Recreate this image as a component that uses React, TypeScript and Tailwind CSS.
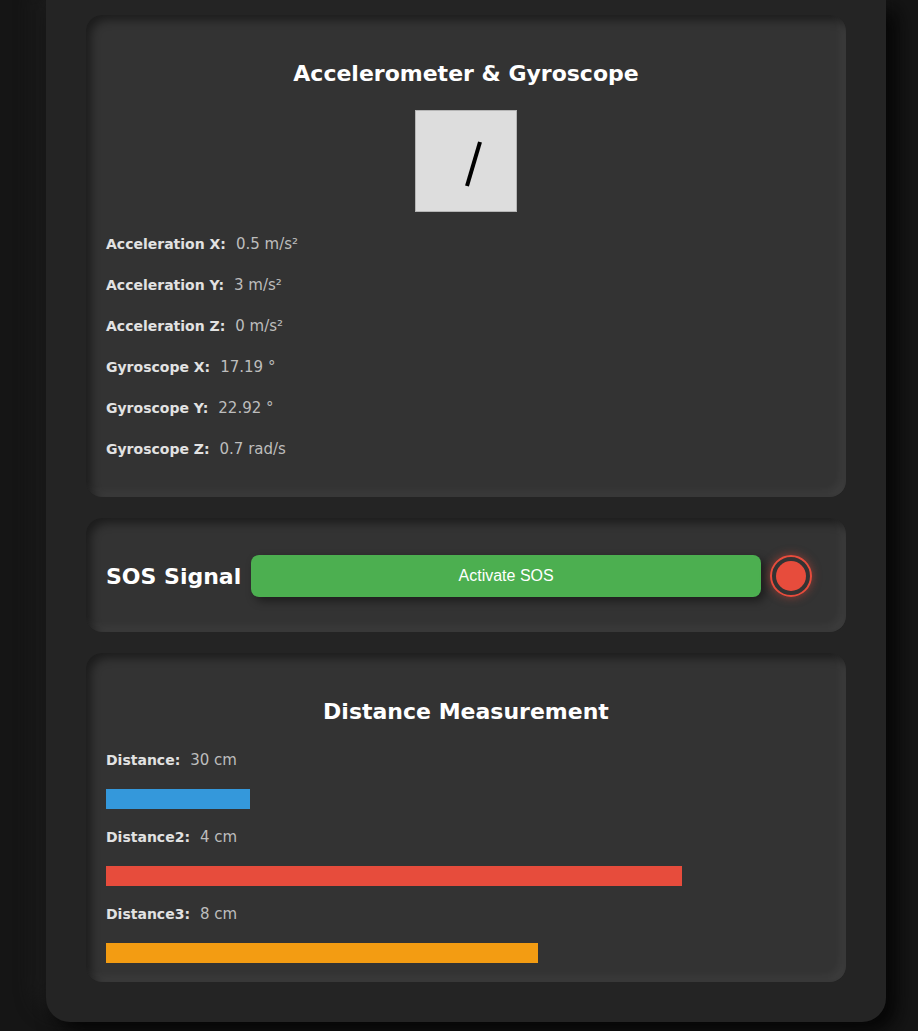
import { ReactNode } from 'react';

const ACCEL_ROWS = [
  { label: 'Acceleration X:', value: '0.5 m/s²' },
  { label: 'Acceleration Y:', value: '3 m/s²' },
  { label: 'Acceleration Z:', value: '0 m/s²' },
  { label: 'Gyroscope X:', value: '17.19 °' },
  { label: 'Gyroscope Y:', value: '22.92 °' },
  { label: 'Gyroscope Z:', value: '0.7 rad/s' },
];

const DISTANCES = [
  { label: 'Distance:', value: '30 cm', pct: 20, color: 'bg-[#3498db]' },
  { label: 'Distance2:', value: '4 cm', pct: 80, color: 'bg-[#e74c3c]' },
  { label: 'Distance3:', value: '8 cm', pct: 60, color: 'bg-[#f39c12]' },
];

function Card({ children, className = '' }: { children: ReactNode; className?: string }) {
  return (
    <div
      className={`rounded-[16px] bg-[#333333] px-5 shadow-[inset_5px_5px_10px_rgba(0,0,0,0.45),inset_-5px_-5px_10px_rgba(255,255,255,0.05)] ${className}`}
    >
      {children}
    </div>
  );
}

function Reading({ label, value }: { label: string; value: string }) {
  return (
    <div className="flex h-[21px] items-baseline">
      <span className="text-[14px] leading-[21px] font-bold text-[#e2e2e2]">{label}</span>
      <span className="ml-[10px] text-[15px] leading-[21px] text-[#bdbdbd]">{value}</span>
    </div>
  );
}

export default function App() {
  return (
    <div
      className="min-h-[1031px] bg-[#151515] pb-[9px]"
      style={{ fontFamily: '"DejaVu Sans", "Noto Sans", sans-serif' }}
    >
      <div className="ml-[46px] w-[840px] rounded-b-[24px] bg-[#242424] px-10 pt-[15px] pb-10 shadow-[10px_10px_20px_#050505,-10px_-10px_20px_#1d1d1d]">
        {/* Accelerometer */}
        <Card className="pt-5 pb-[37px]">
          <h2 className="mt-[22px] text-center text-[22px] font-bold leading-[33px] text-white">
            Accelerometer &amp; Gyroscope
          </h2>
          <div className="mt-5 flex justify-center">
            <div className="h-[102px] w-[102px] border border-[#b5b5b5] bg-[#dddddd]">
              <svg viewBox="0 0 100 100" className="h-[100px] w-[100px]">
                <line x1="64" y1="31" x2="51" y2="75" stroke="#000" strokeWidth="4" />
              </svg>
            </div>
          </div>
          <div className="mt-[22px] flex flex-col gap-5">
            {ACCEL_ROWS.map((r) => (
              <Reading key={r.label} label={r.label} value={r.value} />
            ))}
          </div>
        </Card>

        {/* SOS */}
        <Card className="mt-[21px] flex items-center pt-[37px] pb-[35px]">
          <h2 className="text-[22px] font-bold leading-[33px] text-white">SOS Signal</h2>
          <button
            className="ml-[10px] h-[42px] flex-1 rounded-lg bg-[#4caf50] text-[16px] text-white shadow-[4px_4px_10px_rgba(0,0,0,0.45)]"
            style={{ fontFamily: '"Liberation Sans", Arial, sans-serif' }}
          >
            Activate SOS
          </button>
          <div className="mr-[14px] ml-[9px] flex h-[42px] w-[42px] items-center justify-center rounded-full border-2 border-[#e74c3c] shadow-[0_0_10px_rgba(231,76,60,0.5)]">
            <div className="h-[30px] w-[30px] rounded-full bg-[#e74c3c]" />
          </div>
        </Card>

        {/* Distance */}
        <Card className="mt-[21px] pt-5 pb-[19px]">
          <h2 className="mt-[22px] text-center text-[22px] font-bold leading-[33px] text-white">
            Distance Measurement
          </h2>
          <div className="mt-[22px]">
            {DISTANCES.map((d, i) => (
              <div key={d.label} className={i > 0 ? 'mt-[18px]' : ''}>
                <Reading label={d.label} value={d.value} />
                <div className="mt-[18px] h-5 w-full">
                  <div className={`h-5 ${d.color}`} style={{ width: `${d.pct}%` }} />
                </div>
              </div>
            ))}
          </div>
        </Card>
      </div>
    </div>
  );
}
